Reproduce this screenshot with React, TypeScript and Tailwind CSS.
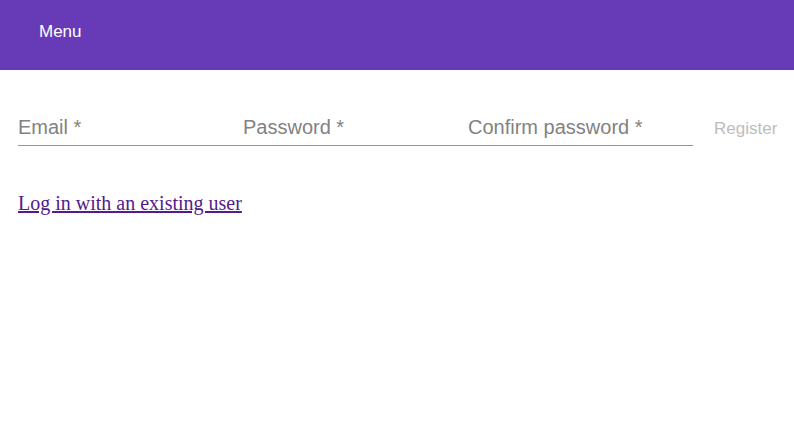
import React from 'react';

const Field = ({ label }: { label: string }) => (
    <div className="w-[225px] h-[46px] border-b border-[#949494] flex items-end pb-[6px]">
        <span className="text-[20px] leading-[24px] text-[#828282]">{label}</span>
    </div>
);

const App = () => {
    return (
        <div className="w-[794px] h-[446px] bg-white" style={{ fontFamily: '"Liberation Sans", Arial, sans-serif' }}>
            <header className="h-[70px] bg-[#673ab7] flex items-center px-[39px]">
                <span className="text-white text-[17px] pb-[7px]">Menu</span>
            </header>

            <div className="flex items-end pl-[18px] pt-[30px]">
                <Field label="Email *" />
                <Field label="Password *" />
                <Field label="Confirm password *" />
                <span className="ml-[21px] pb-[5px] text-[17px] text-[#bdbdbd]">Register</span>
            </div>

            <div className="pl-[18px] pt-[42px]">
                <a href="#" className="text-[20px] text-[#551a8b] underline" style={{ fontFamily: '"Liberation Serif", "Times New Roman", serif' }}>
                    Log in with an existing user
                </a>
            </div>
        </div>
    );
};

export default App;
